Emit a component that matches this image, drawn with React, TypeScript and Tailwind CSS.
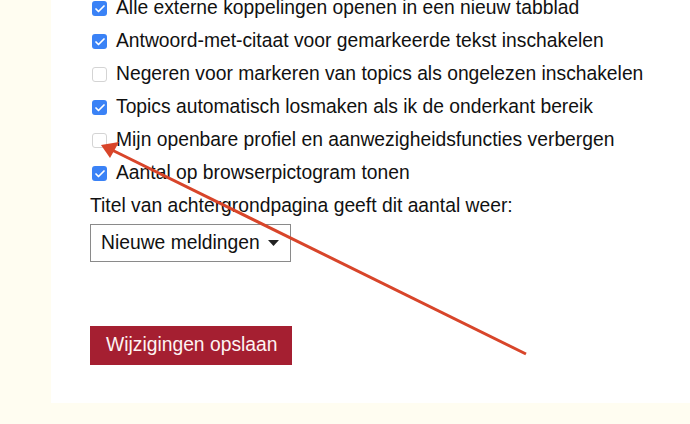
import { Check } from 'lucide-react'

const rows = [
  { label: 'Alle externe koppelingen openen in een nieuw tabblad', checked: true },
  { label: 'Antwoord-met-citaat voor gemarkeerde tekst inschakelen', checked: true },
  { label: 'Negeren voor markeren van topics als ongelezen inschakelen', checked: false },
  { label: 'Topics automatisch losmaken als ik de onderkant bereik', checked: true },
  { label: 'Mijn openbare profiel en aanwezigheidsfuncties verbergen', checked: false },
  { label: 'Aantal op browserpictogram tonen', checked: true },
]

function Box({ checked }: { checked: boolean }) {
  return checked ? (
    <span className="ml-[2px] w-[15px] h-[15px] rounded-[3px] bg-[#3a82f6] flex items-center justify-center flex-shrink-0">
      <Check className="w-[12px] h-[12px] text-white" strokeWidth={3.5} />
    </span>
  ) : (
    <span className="ml-[2px] w-[15px] h-[15px] rounded-[3px] bg-white border border-[#d4d4d4] flex-shrink-0" />
  )
}

export default function App() {
  return (
    <div
      className="relative w-[690px] h-[424px] overflow-hidden bg-[#fffdf1] text-[19.3px] text-[#111]"
      style={{ fontFamily: '"Liberation Sans", Arial, sans-serif' }}
    >
      <div className="ml-[51px] bg-white pl-[39px] pb-[38px] flex flex-col">
        <div className="-mt-[8px] flex flex-col">
          {rows.map((r) => (
            <label key={r.label} className="h-[33px] flex items-center gap-[9px] whitespace-nowrap">
              <Box checked={r.checked} />
              <span>{r.label}</span>
            </label>
          ))}
          <div className="h-[33px] flex items-center whitespace-nowrap">Titel van achtergrondpagina geeft dit aantal weer:</div>
        </div>

        <div className="mt-[1px] w-[201px] h-[38px] border border-[#8a8a8a] flex items-center pl-[10px] pr-[11px] justify-between">
          <span>Nieuwe meldingen</span>
          <svg width="11" height="6" viewBox="0 0 11 6">
            <path d="M0 0 L11 0 L5.5 6 Z" fill="#222" />
          </svg>
        </div>

        <button className="mt-[64px] w-[202px] h-[39px] bg-[#a51f31] text-[#fdf3f3] text-left pl-[16px] whitespace-nowrap">
          Wijzigingen opslaan
        </button>
      </div>

      {/* annotation arrow */}
      <svg className="absolute left-0 top-0 pointer-events-none" width="690" height="424">
        <line x1="112" y1="150" x2="526" y2="354" stroke="#d8452a" strokeWidth="3" />
        <polygon points="101,145 119,142 110,158" fill="#d8452a" />
      </svg>
    </div>
  )
}
